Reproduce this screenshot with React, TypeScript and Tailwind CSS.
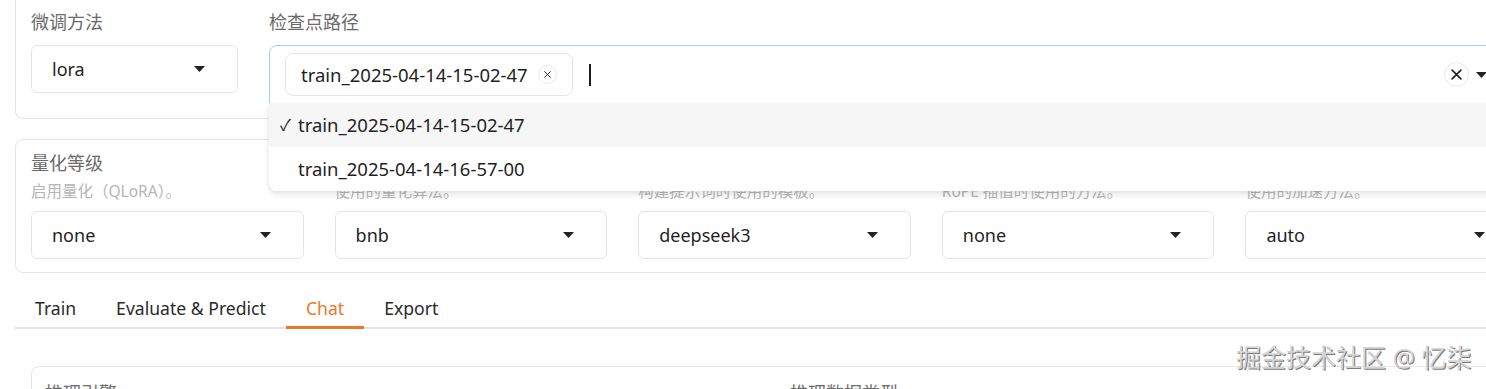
import React from "react";

const Caret = () => (
  <svg width="11" height="6" viewBox="0 0 11 6" className="shrink-0">
    <path d="M0 0H11L5.5 6Z" fill="#222" />
  </svg>
);

const XIcon = ({ size, stroke }: { size: number; stroke: number }) => (
  <svg width={size} height={size} viewBox="0 0 10 10">
    <path d="M1 1L9 9M9 1L1 9" stroke="#222" strokeWidth={stroke} strokeLinecap="round" />
  </svg>
);

const Select = ({ value }: { value: string }) => (
  <div className="h-[48px] flex items-center justify-between pl-5 pr-[32px] border border-[#e5e5e5] rounded-md bg-white text-[18px] text-[#1f1f1f]">
    <span>{value}</span>
    <Caret />
  </div>
);

const cols = [
  { label: "量化等级", desc: "启用量化（QLoRA）。", value: "none" },
  { label: "量化方法", desc: "使用的量化算法。", value: "bnb" },
  { label: "对话模板", desc: "构建提示词时使用的模板。", value: "deepseek3" },
  { label: "RoPE 插值方法", desc: "RoPE 插值时使用的方法。", value: "none" },
  { label: "加速方式", desc: "使用的加速方法。", value: "auto" },
];

const tabs = ["Train", "Evaluate & Predict", "Chat", "Export"];

export default function App() {
  return (
    <div className="relative w-[1486px] h-[389px] overflow-hidden bg-white font-['Noto_Sans','Noto_Sans_CJK_SC',sans-serif]">
      <div className="w-[1550px] pl-[15px]">
        {/* Card 1 */}
        <div className="w-[1519px] border-x border-b border-[#e5e5e5] rounded-b-lg pl-[15px] pr-[15px] pt-[10px] pb-[14px] flex items-start gap-[31px]">
          <div className="w-[207px] shrink-0">
            <div className="h-[24px] leading-[24px] text-[18px] text-[#6b6b6b]">微调方法</div>
            <div className="mt-[11px]">
              <Select value="lora" />
            </div>
          </div>
          <div className="flex-1 min-w-0">
            <div className="h-[24px] leading-[24px] text-[18px] text-[#6b6b6b]">检查点路径</div>
            <div className="relative mt-[11px] h-[59px] border border-[#a9cfec] rounded-t-lg flex items-center pl-[15px] pr-[30px] bg-white">
              <div className="h-[43px] flex items-center pl-[15px] pr-[15px] gap-[10px] border border-[#e5e5e5] rounded-lg bg-white">
                <span className="text-[18.5px] text-[#1f1f1f]">train_2025-04-14-15-02-47</span>
                <span className="w-[19px] h-[19px] rounded-full border border-[#e8e8e8] flex items-center justify-center">
                  <XIcon size={7} stroke={1.4} />
                </span>
              </div>
              <span className="ml-[16px] w-[2px] h-[22px] bg-[#1a1a1a]" />
              <div className="ml-auto flex items-center gap-[7px]">
                <span className="w-[25px] h-[25px] rounded-full border border-[#e8e8e8] flex items-center justify-center">
                  <XIcon size={11} stroke={1.5} />
                </span>
                <Caret />
              </div>
              {/* dropdown menu */}
              <div className="absolute left-[-1px] right-[-1px] top-full z-10 bg-white rounded-b-lg shadow-[0_3px_6px_rgba(0,0,0,0.12)] text-[18.5px] text-[#1f1f1f]">
                <div className="h-[44px] flex items-center pl-[11px] bg-[#f6f6f6]">
                  <span className="w-[18px] text-[16px]">✓</span>
                  <span>train_2025-04-14-15-02-47</span>
                </div>
                <div className="h-[44px] flex items-center pl-[11px]">
                  <span className="w-[18px]" />
                  <span>train_2025-04-14-16-57-00</span>
                </div>
              </div>
            </div>
          </div>
        </div>

        {/* Card 2 */}
        <div className="mt-[20px] w-[1519px] border border-[#e5e5e5] rounded-lg px-[15px] pt-[11px] pb-[13px] grid grid-cols-5 gap-x-[31px]">
          {cols.map((c, i) => (
            <div key={i} className="min-w-0">
              <div className="h-[24px] leading-[24px] text-[18px] text-[#6b6b6b] whitespace-nowrap">{c.label}</div>
              <div className="mt-[6px] h-[20px] leading-[20px] text-[15.5px] text-[#b5b5b5] whitespace-nowrap">{c.desc}</div>
              <div className="mt-[10px]">
                <Select value={c.value} />
              </div>
            </div>
          ))}
        </div>

        {/* Tabs */}
        <div className="mt-[15px] w-[1519px] flex border-b-2 border-[#e5e5e5]">
          {tabs.map((t) => {
            const active = t === "Chat";
            return (
              <div
                key={t}
                className={
                  "relative px-5 pt-2 pb-[7px] h-[39px] leading-[24px] text-[17.6px] " +
                  (active ? "text-[#ea7a2a]" : "text-[#2a2a2a]")
                }
              >
                {t}
                {active && <span className="absolute left-0 right-0 -bottom-[2px] h-[3px] bg-[#ea7a2a]" />}
              </div>
            );
          })}
        </div>

        {/* Tab panel */}
        <div className="w-[1519px] px-[16px] pt-[37px]">
          <div className="border border-[#e5e5e5] rounded-lg px-[13px] pt-[14px] pb-4 grid grid-cols-2 gap-x-[31px]">
            <div className="h-[24px] leading-[24px] text-[18px] text-[#6b6b6b]">推理引擎</div>
            <div className="h-[24px] leading-[24px] text-[18px] text-[#6b6b6b]">推理数据类型</div>
          </div>
        </div>
      </div>

      {/* watermark */}
      <div className="absolute left-[1236px] top-[342px] text-[25px] leading-[30px] text-[#d4d4d4] whitespace-nowrap [text-shadow:1px_1px_0_#7a7a7a]">
        掘金技术社区 @ 忆柒
      </div>
    </div>
  );
}
